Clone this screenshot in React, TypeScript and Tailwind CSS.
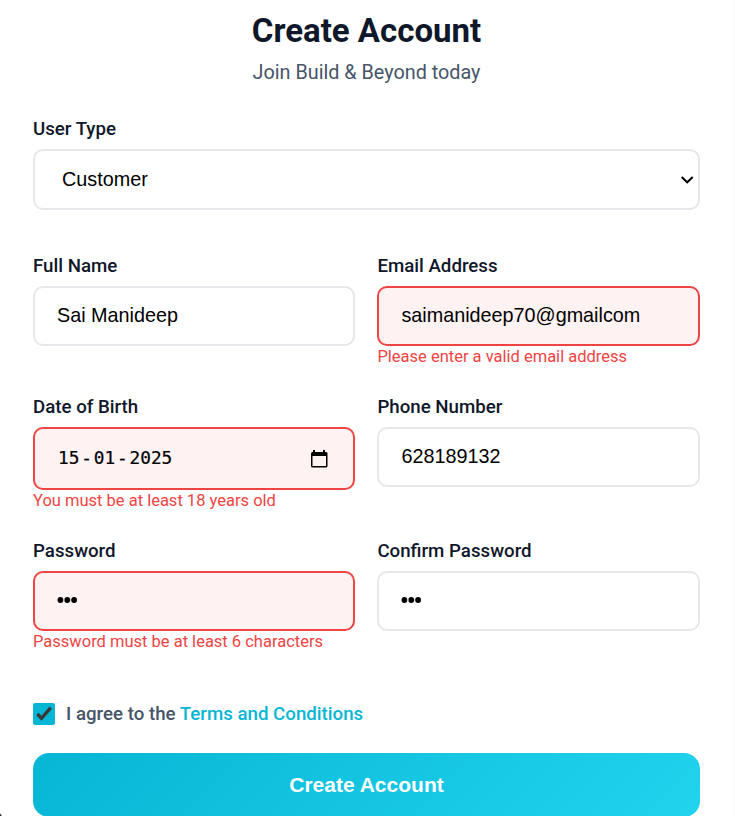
import type { ReactNode } from "react";
import { clsx } from "clsx";

type FieldProps = {
  label: string;
  error?: string;
  className?: string;
  children: ReactNode;
};

function Field({ label, error, className, children }: FieldProps) {
  return (
    <div className={clsx("flex flex-col", className)}>
      <label className="mb-2 block h-6 text-[18.7px] leading-6 font-medium whitespace-nowrap text-[#0f172a]">
        {label}
      </label>
      {children}
      {error && (
        <p className="h-5 pt-px text-[16.5px] leading-5 whitespace-nowrap text-[#ef4444]">{error}</p>
      )}
    </div>
  );
}

type BoxProps = { invalid?: boolean; className?: string; children: ReactNode };

function Box({ invalid, className, children }: BoxProps) {
  return (
    <div
      className={clsx(
        "flex items-center rounded-[10px] border-2 font-['Liberation_Sans',Arial,sans-serif] text-[19.8px] leading-6 text-black",
        invalid ? "border-[#ef4444] bg-[#fef2f2]" : "border-[#e5e7eb] bg-white",
        className,
      )}
    >
      {children}
    </div>
  );
}

function Dots() {
  return (
    <svg className="mb-[2px]" width="22" height="8" viewBox="0 0 22 8" fill="black">
      <circle cx="3.4" cy="4" r="2.9" />
      <circle cx="10.3" cy="4" r="2.9" />
      <circle cx="17.1" cy="4" r="2.9" />
    </svg>
  );
}

export default function App() {
  return (
    <div className="relative h-[816px] w-[735px] overflow-hidden border-r-2 border-[#fcfcfc] bg-white font-[Roboto,sans-serif]">
      <main className="flex w-[700px] flex-col pl-[33px]">
        <header className="flex h-[117px] flex-col items-center">
          <h1 className="mt-[11px] h-10 text-[33px] leading-10 font-bold text-[#0f172a]">Create Account</h1>
          <p className="mt-2 h-7 text-[19.8px] leading-7 text-[#475569]">Join Build &amp; Beyond today</p>
        </header>

        <Field label="User Type" className="h-[137px]">
          <Box className="h-[61px] justify-between pr-[4px] pl-[27px]">
            <span className="pb-[2px]">Customer</span>
            <svg width="14" height="10" viewBox="0 0 14 10" fill="none" stroke="black" strokeWidth="2">
              <path d="M1.7 2 L7.2 7.3 L12.7 2" />
            </svg>
          </Box>
        </Field>

        <div className="grid grid-cols-[322px_322.6px] gap-x-[22.4px]">
          <Field label="Full Name" className="h-[141px]">
            <Box className="h-[60px] pl-[22px]">
              <span className="pb-[2px]">Sai Manideep</span>
            </Box>
          </Field>
          <Field label="Email Address" error="Please enter a valid email address" className="h-[141px]">
            <Box invalid className="h-[60px] pl-[22px]">
              <span className="pb-[2px]">saimanideep70@gmailcom</span>
            </Box>
          </Field>
          <Field label="Date of Birth" error="You must be at least 18 years old" className="h-[144px]">
            <Box invalid className="h-[63px] justify-between pr-[25px] pl-[23px]">
              <span className="flex pb-[2px] font-['DejaVu_Sans_Mono',monospace] text-[17.8px] [-webkit-text-stroke:0.2px_black]">
                <span>15</span>
                <span className="px-[1.8px]">-</span>
                <span>01</span>
                <span className="px-[1.8px]">-</span>
                <span>2025</span>
              </span>
              <svg width="18" height="20" viewBox="0 0 18 20" fill="black">
                <path
                  fillRule="evenodd"
                  d="M3 1h2v2h8V1h2v2h1a1.5 1.5 0 0 1 1.5 1.5v12.5a1.5 1.5 0 0 1-1.5 1.5H2.5A1.5 1.5 0 0 1 1 17V4.5A1.5 1.5 0 0 1 2.5 3H3zM2.5 7v10H16V7z"
                />
              </svg>
            </Box>
          </Field>
          <Field label="Phone Number" className="h-[144px]">
            <Box className="h-[60px] pl-[22px]">
              <span className="pb-[2px]">628189132</span>
            </Box>
          </Field>
          <Field label="Password" error="Password must be at least 6 characters" className="h-[164px]">
            <Box invalid className="h-[60px] pl-[22px]">
              <Dots />
            </Box>
          </Field>
          <Field label="Confirm Password" className="h-[164px]">
            <Box className="h-[60px] pl-[22px]">
              <Dots />
            </Box>
          </Field>
        </div>

        <label className="flex h-[22px] items-center text-[18.7px] leading-[22px] font-medium whitespace-nowrap text-[#475569]">
          <span className="mr-[11px] flex size-[22px] items-center justify-center rounded-[2px] bg-[#06b6d4]">
            <svg width="22" height="22" viewBox="0 0 22 22" fill="none" stroke="#383838" strokeWidth="3.3">
              <path d="M4.3 11 L8.5 15.3 L17.8 4.6" />
            </svg>
          </span>
          <span>
            I agree to the <a className="text-[#06b6d4]">Terms and Conditions</a>
          </span>
        </label>

        <button className="mt-[28px] h-[64px] w-full rounded-[16px] bg-[linear-gradient(135deg,#06b6d4,#22d3ee)] font-['Liberation_Sans',Arial,sans-serif] text-[21px] leading-6 font-bold text-white">
          Create Account
        </button>
      </main>
      <span className="absolute top-[812px] left-[-10px] size-3 rounded-full bg-[#1f2d2d]" />
    </div>
  );
}
